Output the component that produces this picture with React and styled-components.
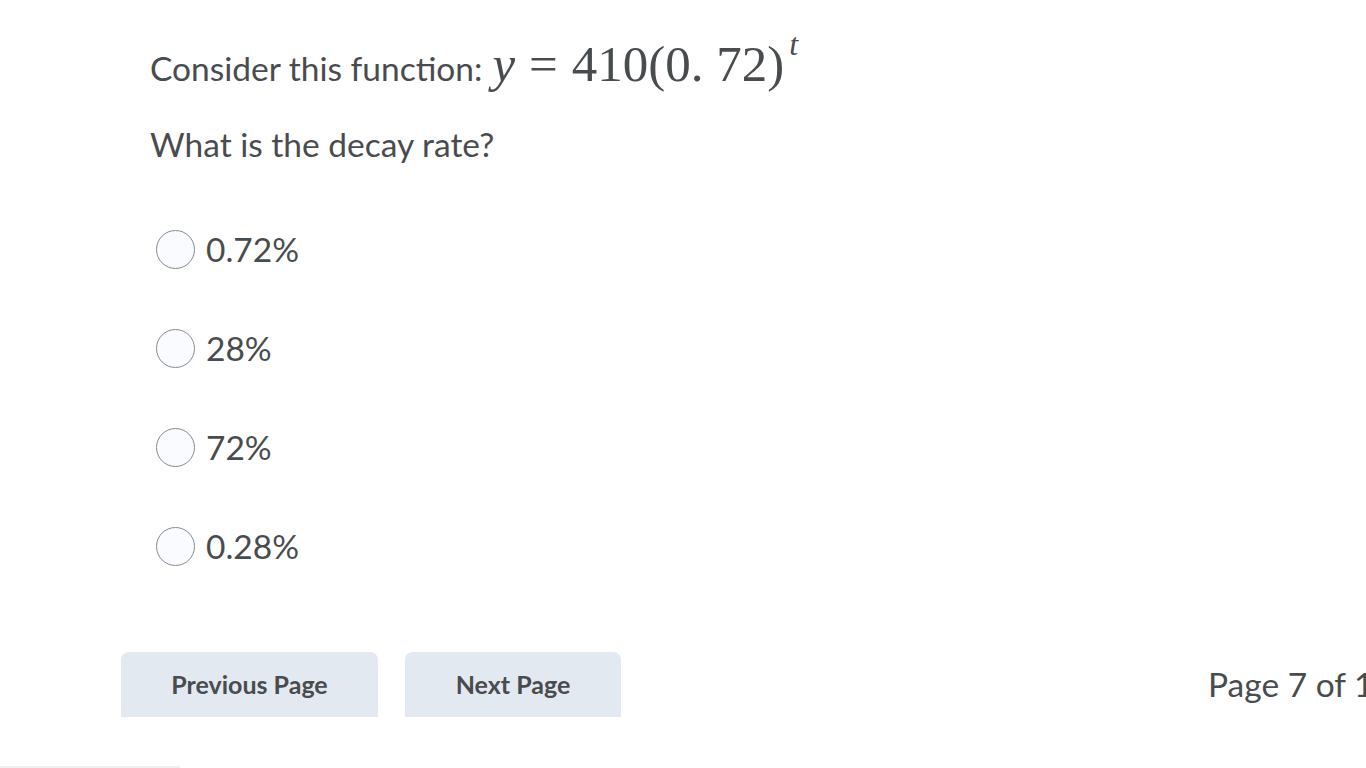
import React from "react";
import styled, { createGlobalStyle } from "styled-components";

const Global = createGlobalStyle`
  html, body { margin: 0; padding: 0; background: #fff; overflow: hidden; }
  body { font-family: Lato, "Open Sans", sans-serif; color: #494c4e; }
`;

const Page = styled.div`
  position: relative;
  width: 1366px;
  height: 768px;
  overflow: hidden;
`;

const Question = styled.div`
  padding: 14px 0 0 150px;
`;

const Prompt = styled.p`
  margin: 0;
  font-size: 33.5px;
  line-height: 76px;
  display: flex;
  align-items: baseline;
`;

const Math = styled.span`
  font-family: "Liberation Serif", "DejaVu Serif", serif;
  font-size: 51px;
  margin-left: 10px;
  white-space: pre;
  color: #494c4e;
`;

const MathVar = styled.i`
  font-style: italic;
`;

const MathOp = styled.span`
  margin: 0 14px;
`;

const Sup = styled.sup`
  font-size: 32px;
  font-style: italic;
  position: relative;
  top: -8px;
  margin-left: 5px;
`;

const Options = styled.div`
  display: flex;
  flex-direction: column;
  padding: 47px 0 0 156px;
  gap: 59px;
`;

const Option = styled.label`
  display: flex;
  align-items: center;
  gap: 11px;
  font-size: 33.5px;
  height: 40px;
`;

const Radio = styled.span`
  width: 37px;
  height: 37px;
  border-radius: 50%;
  border: 1.5px solid #868c8f;
  background: #f9fbff;
  flex: none;
`;

const Footer = styled.div`
  display: flex;
  align-items: flex-start;
  padding: 86px 0 0 121px;
`;

const NavButton = styled.button`
  flex: none;
  width: ${(p) => p.w}px;
  height: 65px;
  margin-right: 27px;
  border: none;
  border-radius: 8px 8px 0 0;
  background: #e3e9f1;
  color: #494c4e;
  font-family: Lato, sans-serif;
  font-weight: 700;
  font-size: 25px;
  padding: 0 0 2px;
`;

const PageCount = styled.div`
  flex: none;
  margin-left: 560px;
  font-size: 33.5px;
  line-height: 65px;
  white-space: nowrap;
`;

const BottomLine = styled.div`
  position: absolute;
  left: 0;
  bottom: 0;
  width: 180px;
  height: 2px;
  background: #eeeeee;
`;

const options = ["0.72%", "28%", "72%", "0.28%"];

export default function App() {
  return (
    <Page>
      <Global />
      <Question>
        <Prompt>
          Consider this function:
          <Math>
            <MathVar>y</MathVar>
            <MathOp>=</MathOp>410(0. 72)<Sup>t</Sup>
          </Math>
        </Prompt>
        <Prompt>What is the decay rate?</Prompt>
      </Question>
      <Options>
        {options.map((o) => (
          <Option key={o}>
            <Radio />
            {o}
          </Option>
        ))}
      </Options>
      <Footer>
        <NavButton w={257}>Previous Page</NavButton>
        <NavButton w={216}>Next Page</NavButton>
        <PageCount>Page 7 of 10</PageCount>
      </Footer>
      <BottomLine />
    </Page>
  );
}
